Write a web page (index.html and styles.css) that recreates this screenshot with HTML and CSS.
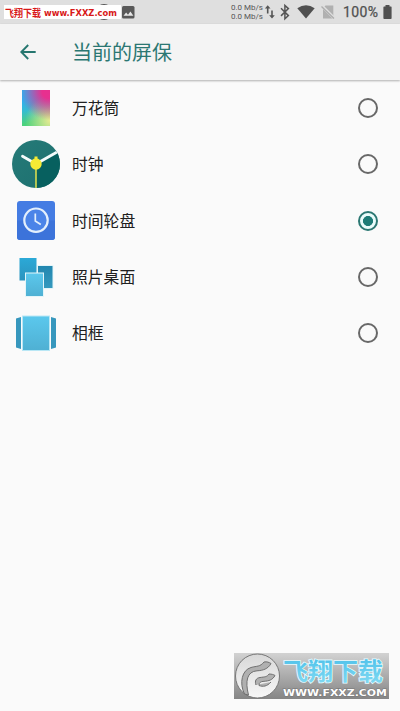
FILE: index.html
```html
<!DOCTYPE html>
<html lang="zh-CN">
<head>
<meta charset="utf-8">
<title>当前的屏保</title>
<link rel="stylesheet" href="styles.css">
</head>
<body>
<div class="screen">
  <div class="status">
    <div class="left">
      <svg class="notice" width="136" height="24" viewBox="0 0 136 24">
        <circle cx="104" cy="12" r="8" fill="#555"/>
        <rect x="4" y="5" width="117" height="14" fill="#fff"/>
        <text class="tag" x="5" y="17" font-size="10" textLength="36" lengthAdjust="spacingAndGlyphs">飞翔下载</text>
        <text class="tag-url" x="44" y="16.200" font-size="9" textLength="73" lengthAdjust="spacingAndGlyphs">www.FXXZ.com</text>
        <rect x="122" y="6" width="12.500" height="12.500" rx="1.500" fill="#595959"/>
        <path d="M123.500 15.800l2.600-3.300 1.900 2.200 2.400-3.200 3 4.300z" fill="#e8e8e8"/>
      </svg>
    </div>
    <div class="speed"><span>0.0 Mb/s</span><span>0.0 Mb/s</span></div>
    <svg class="icons" width="72" height="24" viewBox="264 0 72 24">
      <g fill="none" stroke="#555" stroke-width="1.600">
        <path d="M267.700 13.500V7M272 10.500v6.500"/>
        <path d="M281 8.300l7.400 7.300-3.500 3.200V5.400l3.500 3.200-7.400 7.300" stroke-width="1.500"/>
      </g>
      <path d="M264.900 8.600l2.800-3.300 2.800 3.300zM269.200 15.200l2.800 3.300 2.800-3.300z" fill="#555"/>
      <path d="M297.300 8.200q8.700-6 17.400 0l-8.700 10.300z" fill="#505050"/>
      <path d="M325.500 5.500h7.800v13H323V8z" fill="#b0b0b0"/>
      <path d="M321.500 5.500l13 13" stroke="#dfdfdf" stroke-width="3"/>
      <path d="M321.500 6.500l12.500 12" stroke="#adadad" stroke-width="1.300"/>
    </svg>
    <span class="percent">100%</span>
    <svg class="battery" width="9" height="14" viewBox="0 0 9 14"><path d="M2.500 0h4v1.500H8q.6 0 .6.700v11q0 .8-.8.800H1.200q-.8 0-.8-.8v-11q0-.7.700-.7h1.400z" fill="#505050"/></svg>
  </div>
  <header class="toolbar">
    <svg class="back" width="16" height="16" viewBox="0 0 16 16"><path d="M15.700 8H1.500M8.200 1L1.300 8l6.900 7" fill="none" stroke="#26766f" stroke-width="1.900"/></svg>
    <h1>当前的屏保</h1>
  </header>
  <main class="list">
    <div class="row">
      <div class="icon kaleido"></div>
      <span class="name">万花筒</span><i class="radio"></i>
    </div>
    <div class="row">
      <div class="icon"><svg width="48" height="48" viewBox="0 0 48 48">
        <defs>
          <clipPath id="face"><circle cx="24" cy="24" r="24"/></clipPath>
          <linearGradient id="shade" x1="0" y1="0" x2="1" y2="1"><stop offset="0" stop-color="#257a78"/><stop offset="1" stop-color="#1d706f"/></linearGradient>
        </defs>
        <g clip-path="url(#face)">
          <rect width="48" height="48" fill="url(#shade)"/>
          <path d="M24 24L50 8v42H24z" fill="#07605f"/>
          <path d="M24 24L10.500 16.200" stroke="#f3fbfb" stroke-width="2.800" stroke-linecap="round"/>
          <path d="M24 24L46 11.500" stroke="#f3fbfb" stroke-width="2.800"/>
          <path d="M24 17v31" stroke="#e4e34c" stroke-width="1.500"/>
          <path d="M24 16.500v5" stroke="#f5ea35" stroke-width="3"/>
          <circle cx="24" cy="24" r="5.700" fill="#f5ea35"/>
        </g>
      </svg></div>
      <span class="name">时钟</span><i class="radio"></i>
    </div>
    <div class="row">
      <div class="icon"><svg width="38" height="39" viewBox="0 0 38 39">
        <rect width="38" height="39" rx="3" fill="#447ce3"/>
        <path d="M0 19.500h38V36q0 3-3 3H3q-3 0-3-3z" fill="#3c73da"/>
        <circle cx="19" cy="19.200" r="11.700" fill="#4b84e8" stroke="#e3effc" stroke-width="2.200"/>
        <path d="M18.300 12.500v7.500l5.500 3.500" fill="none" stroke="#e3effc" stroke-width="1.700"/>
      </svg></div>
      <span class="name">时间轮盘</span><i class="radio on"></i>
    </div>
    <div class="row">
      <div class="icon"><svg width="48" height="48" viewBox="0 0 48 48">
        <defs>
          <linearGradient id="p1" x2="0" y2="1"><stop stop-color="#2ba9d7"/><stop offset="1" stop-color="#2c93bd"/></linearGradient>
          <linearGradient id="p2" x2="0" y2="1"><stop stop-color="#2186af"/><stop offset="1" stop-color="#3599be"/></linearGradient>
          <linearGradient id="p3" x2="0" y2="1"><stop stop-color="#5bc8ed"/><stop offset="1" stop-color="#4fb0d3"/></linearGradient>
        </defs>
        <rect x="7.500" y="5" width="17" height="22.500" fill="url(#p1)"/>
        <g stroke="#e4f5f9">
          <rect x="25.500" y="12.500" width="15.500" height="23" fill="url(#p2)"/>
          <rect x="13.500" y="20" width="18" height="23.500" fill="url(#p3)"/>
        </g>
      </svg></div>
      <span class="name">照片桌面</span><i class="radio"></i>
    </div>
    <div class="row">
      <div class="icon"><svg width="48" height="48" viewBox="0 0 48 48">
        <path d="M4 9.500l5-1.500v32l-5-1.500zM44 9.500L39 8v32l5-1.500z" fill="#3797bd"/>
        <rect x="10.500" y="7" width="27" height="34.500" fill="url(#p3)" stroke="#b9e7f5"/>
      </svg></div>
      <span class="name">相框</span><i class="radio"></i>
    </div>
  </main>
  <footer>
    <svg width="156" height="47" viewBox="0 0 156 47">
      <defs>
        <linearGradient id="bg" x2="0" y2="1"><stop stop-color="#d2d2d2"/><stop offset="1" stop-color="#858585"/></linearGradient>
        <linearGradient id="blue" x2="0" y2="1"><stop stop-color="#45bce8"/><stop offset="1" stop-color="#85dcf3"/></linearGradient>
        <linearGradient id="disc" x2="0" y2="1"><stop stop-color="#d8d8d8"/><stop offset="1" stop-color="#f7f7f7"/></linearGradient>
      </defs>
      <rect width="155" height="46" fill="url(#bg)"/>
      <circle cx="23.500" cy="23" r="22" fill="url(#disc)" stroke="#777"/>
      <g fill="#b0b0b0" stroke="#707070" stroke-width="1" stroke-linejoin="round">
        <path d="M10.500 41C5 30 8 17 17 14.500c6-1.700 9-.5 13-5.500 3-.5 5 .3 7 1.500-3 5.500-8 7-14 7.300C13 18.500 11 28 14.500 42z"/>
        <path d="M22 32c-1.500-4 0-7 4-7.500 5-.7 7-.5 9-3.500 2.500 0 4.500.5 6 1.500-2.500 4.500-6 5.500-11 5.800-3.500.2-5 1.200-5 4.200 4 1.500 8 1 12-3.500"/>
      </g>
      <text class="brand" x="49" y="26.500" font-size="24" textLength="100" lengthAdjust="spacingAndGlyphs">飞翔下载</text>
      <text class="brand-url" x="49" y="42.500" font-size="9.500" textLength="104" lengthAdjust="spacingAndGlyphs">WWW.FXXZ.COM</text>
    </svg>
  </footer>
</div>
</body>
</html>
```
FILE: styles.css
```css
* { box-sizing: border-box; }
body { margin: 0; background: #fafafa; font-family: Roboto, "Noto Sans CJK SC", sans-serif; }
.screen { width: 400px; height: 711px; display: flex; flex-direction: column; overflow: hidden; }
svg { display: block; flex: none; }
.status { height: 24px; flex: none; display: flex; align-items: center; background: #dfdfdf; color: #555; }
.left { width: 231px; }
.speed { width: 33px; display: flex; flex-direction: column; font-size: 8px; line-height: 9px; white-space: nowrap; letter-spacing: -.02px; }
.percent { width: 47px; padding-left: 7px; font-size: 14px; line-height: 24px; letter-spacing: .35px; color: #505050; -webkit-text-stroke: .25px #505050; }
.tag { font-family: "Noto Sans CJK SC", sans-serif; font-weight: 700; fill: #d81818; }
.tag-url { font-family: "DejaVu Sans", sans-serif; font-weight: 700; fill: #d81818; }
.brand { font-family: "Noto Sans CJK SC", sans-serif; font-weight: 700; fill: url(#blue); stroke: #e8fbff; stroke-width: 1.6px; paint-order: stroke; }
.brand-url { font-family: "DejaVu Sans", sans-serif; font-weight: 700; fill: #fff; stroke: #777; stroke-width: 1px; paint-order: stroke; }
.toolbar { height: 56px; flex: none; display: flex; align-items: center; padding-left: 20px; background: #f4f4f4; box-shadow: 0 1px 2px rgba(0,0,0,.3); position: relative; }
h1 { margin: 0 0 0 36px; padding-top: 2px; font-size: 20px; line-height: 28px; font-weight: 400; color: #2b7772; }
.list { flex: 1; }
.row { height: 56.25px; display: flex; align-items: center; padding: 0 22px 0 12px; }
.icon { width: 48px; height: 48px; display: flex; align-items: center; justify-content: center; }
.kaleido { width: 28px; height: 36px; margin: 0 10px; background: radial-gradient(circle at 95% 5%, #e7308f 15%, transparent 65%), radial-gradient(circle at 100% 85%, #e8ea92, transparent 60%), linear-gradient(165deg, #2db0f0 25%, #35bcd0 50%, #4bd27c 80%); }
.name { flex: 1; margin-left: 12px; padding-top: 2px; font-size: 15.8px; line-height: 24px; color: #202020; }
.radio { width: 20px; height: 20px; border: 2px solid #686868; border-radius: 50%; }
.radio.on { border-color: #2b7772; background: radial-gradient(circle, #1d7b76 4.700px, #e9fbfa 5.300px); }
footer { height: 58px; padding-left: 234px; }
```
